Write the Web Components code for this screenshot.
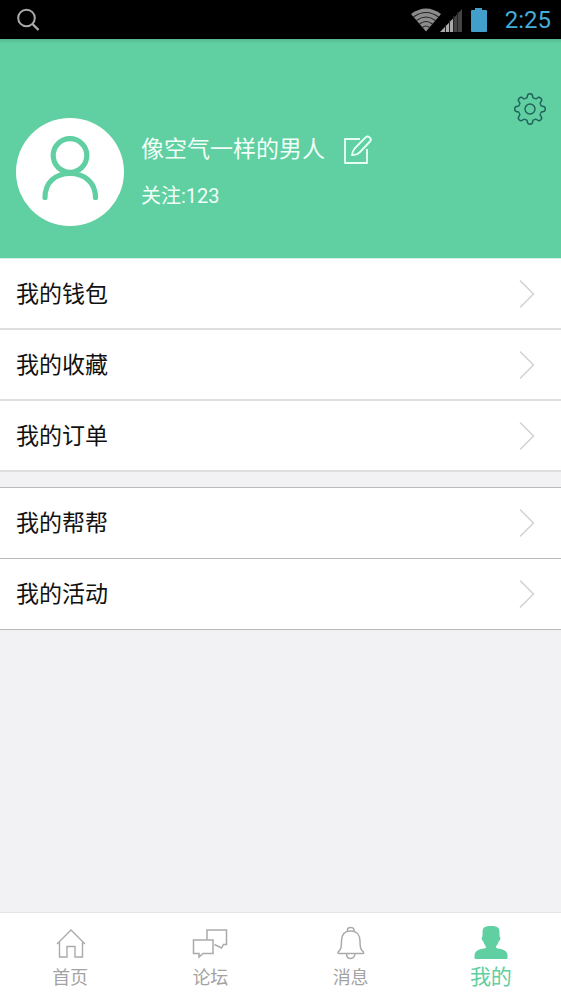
<!DOCTYPE html>
<html lang="zh-CN">
<head>
<meta charset="utf-8">
<meta name="viewport" content="width=device-width, initial-scale=1">
<title>我的</title>
<style>
  html, body { margin: 0; height: 100%; }
  body {
    font-family: Roboto, "Noto Sans CJK SC", sans-serif;
    --green: #60cfa1;
    background: #f2f2f5;
  }
</style>
</head>
<body>
<profile-page></profile-page>
<script>
const gearTooth = 'M-4.6-11C-3.4-10.5-2.8-11.2-2.7-12.6C-2.6-16.2 2.6-16.2 2.7-12.6C2.8-11.2 3.4-10.5 4.6-11';
const gearTeeth = [0, 45, 90, 135, 180, 225, 270, 315]
  .map(a => `<path d="${gearTooth}" transform="rotate(${a})"/>`).join('');

const icons = {
  search: [24, 24, '<g fill="none" stroke="#aaa" stroke-width="2"><circle cx="10.5" cy="10" r="8.3"/><path d="M16.5 16l6 6" stroke-width="2.4"/></g>'],
  wifi: [29, 26, '<path d="M0 7Q15-4 30 7L15 24.500Z" fill="#8c8c8c"/><g fill="none" stroke="#222" stroke-width="1.100"><path d="M2.500 10q12.500-9 25 0M5.500 13.500q9.500-7 19 0M8.500 17q6.500-5 13 0M11.500 20.500q3.500-3 7 0"/></g>'],
  signal: [22, 24, '<path d="M0 24L14 9.500V24Z" fill="#aaa"/><path d="M14 9.500L22 1V24H14Z" fill="#444"/><path d="M5.500 17v7M9.500 12v12M13.500 8v16M17.500 4v20" stroke="#222" stroke-width="1"/>'],
  battery: [18, 26, '<path d="M5 1h7v2h4q1 0 1 1v20q0 1-1 1H2q-1 0-1-1V4q0-1 1-1h3z" fill="#419fca"/>'],
  gear: [34, 34, `<g transform="translate(17 17)" fill="none" stroke="#20615a" stroke-width="1.400" stroke-linejoin="round">${gearTeeth}<circle r="5"/></g>`],
  edit: [30, 30, '<g fill="none" stroke="#e4fff3" stroke-width="1.900" stroke-linejoin="round"><path d="M17 5H2V29H24V15"/><path d="M9 21Q9.500 17 12 14L22.500 3.500C25 .8 29.500 4.500 27 7.500L16.500 18.500Q13.500 21.500 9 21Z"/></g>'],
  avatar: [108, 108, '<g fill="none" stroke="#60cfa1" stroke-width="5.200" stroke-linecap="round"><circle cx="54" cy="37.500" r="16.800"/><path d="M29 79.500C29 64 40 55.500 54 55.500S79.500 64 79.500 79.500"/></g>'],
  arrow: [16, 30, '<path d="M1 1.500L14.500 15L1 28.500" fill="none" stroke="#d2d2d2" stroke-width="1.500"/>'],
  home: [36, 36, '<g fill="none" stroke="#aaa" stroke-width="1.400"><path d="M5 18L19 4L33 18M7.500 16V31H15V20.500H23V31H30.500V16"/></g>'],
  forum: [36, 36, '<g fill="none" stroke="#aaa" stroke-width="1.500"><path d="M15 13.500V4H34.500V18.500H31.500L29.500 22L22.500 18.500"/><path d="M1.500 14H21V27.500H11L7 31V27.500H1.500Z"/></g>'],
  bell: [36, 36, '<g fill="none" stroke="#aaa" stroke-width="1.500" stroke-linejoin="round"><path d="M14.500 6V3.500Q14.500 1.500 17.500 1.500T21 3.500V6"/><path d="M17.500 5C11 5 8.500 9.500 8.500 15C8.500 21.500 8 23.500 5 26Q4.500 27.500 6 27.500H30Q31 27.500 30.500 26C27.500 23.500 27 21.500 27 15C27 9.500 24 5 17.500 5Z"/><path d="M13.500 27.500Q13.500 32.500 17.500 32.500T22 27.500"/></g>'],
  person: [36, 36, '<path d="M9.500 6C9.500 1.500 12 0 18 0S26.500 1.500 26.500 6V10.500Q28 11 27 14L25.700 15.500C25 18.500 23 20 22.700 21.500Q24 22.500 28 23Q34.500 24.500 34.500 29.500V32Q34.500 33 33.500 33H2.500Q1.500 33 1.500 32V29.500Q1.500 24.500 8 23Q12 22.500 13.300 21.500C13 20 11 18.500 10.300 15.500L9 14Q8 11 9.500 10.500Z" fill="#60cfa1"/>']
};

function define(name, markup, setup) {
  const template = document.createElement('template');
  template.innerHTML = markup;
  customElements.define(name, class extends HTMLElement {
    connectedCallback() {
      if (this.shadowRoot) return;
      const root = this.attachShadow({ mode: 'open' });
      root.append(template.content.cloneNode(true));
      if (setup) setup(this, root);
    }
  });
}

define('app-icon', `<style>:host{display:block;flex:none}span,svg{display:block}svg{overflow:visible}</style><span></span>`, (host, root) => {
  const [w, h, art] = icons[host.getAttribute('name')];
  root.querySelector('span').innerHTML =
    `<svg width="${w}" height="${h}" viewBox="0 0 ${w} ${h}" aria-hidden="true">${art}</svg>`;
});

define('status-bar', `
<style>
  :host{display:flex;align-items:center;height:39px;padding:0 10px 0 16px;background:#000;color:#43acd9;font-size:24px;line-height:28px}
  .space{flex:1}
  .battery{margin:0 17px 0 8px}
</style>
<app-icon name="search"></app-icon><span class="space"></span>
<app-icon name="wifi"></app-icon><app-icon name="signal"></app-icon>
<app-icon class="battery" name="battery"></app-icon><time>2:25</time>`);

define('profile-header', `
<style>
  :host{display:grid;grid-template-columns:auto 1fr auto;column-gap:17px;box-sizing:border-box;height:219px;padding:53px 14px 0 16px;
    background:linear-gradient(#54b58d,var(--green) 4px);color:#f2fff9}
  button{border:0;padding:0;background:none;display:block;cursor:pointer}
  .avatar{background:#fff;border-radius:50%;align-self:start;margin-top:26px}
  .info{padding-top:41px}
  .name{display:flex;align-items:center;gap:18px}
  .name button{padding-bottom:2px}
  h1{margin:0;font-weight:400;font-size:23px;line-height:34px}
  p{margin:14px 0 0;font-size:20px;line-height:30px}
  .gear{align-self:start}
</style>
<button class="avatar" aria-label="头像"><app-icon name="avatar"></app-icon></button>
<div class="info">
  <div class="name"><h1><slot name="name"></slot></h1><button aria-label="编辑"><app-icon name="edit"></app-icon></button></div>
  <p><slot name="follow"></slot></p>
</div>
<button class="gear" aria-label="设置"><app-icon name="gear"></app-icon></button>`);

define('menu-group', `
<style>
  :host{display:block;background:#fff;border-top:1px solid var(--top);--line:1px solid #b9b9bb;--top:#b9b9bb}
  :host([soft]){--line:2px solid #dedee0;--top:#d5efe4}
</style><slot></slot>`);

define('menu-row', `
<style>
  :host{display:block}
  a{display:flex;align-items:center;justify-content:space-between;box-sizing:border-box;height:71px;padding:0 26px 0 16px;
    border-bottom:var(--line);color:#111;text-decoration:none;font-size:23px;line-height:34px}
  span{padding-top:2px}
</style><a href="#"><span><slot></slot></span><app-icon name="arrow"></app-icon></a>`);

define('tab-item', `
<style>
  :host{flex:1;display:block}
  a{display:flex;flex-direction:column;align-items:center;padding-top:13px;color:#a3a3a3;text-decoration:none;font-size:18px;line-height:32px}
  :host([active]) a{color:var(--green);font-size:21px;line-height:30px}
</style><a href="#"><slot></slot></a>`, (host, root) => {
  const link = root.querySelector('a');
  const icon = document.createElement('app-icon');
  icon.setAttribute('name', host.getAttribute('icon'));
  link.prepend(icon);
  if (host.hasAttribute('active')) link.setAttribute('aria-current', 'page');
});

define('tab-bar', `
<style>
  :host{display:block;background:#fff;border-top:1px solid #e4e4e6}
  nav{display:flex;height:86px}
</style><nav><slot></slot></nav>`);

define('profile-page', `
<style>
  :host{display:flex;flex-direction:column;min-height:100vh}
  main{flex:1;display:flex;flex-direction:column;gap:15px}
</style>
<status-bar></status-bar>
<profile-header><span slot="name">像空气一样的男人</span><span slot="follow">关注:123</span></profile-header>
<main>
  <menu-group soft><menu-row>我的钱包</menu-row><menu-row>我的收藏</menu-row><menu-row>我的订单</menu-row></menu-group>
  <menu-group><menu-row>我的帮帮</menu-row><menu-row>我的活动</menu-row></menu-group>
</main>
<tab-bar>
  <tab-item icon="home">首页</tab-item><tab-item icon="forum">论坛</tab-item><tab-item icon="bell">消息</tab-item><tab-item icon="person" active>我的</tab-item>
</tab-bar>`);
</script>
</body>
</html>
